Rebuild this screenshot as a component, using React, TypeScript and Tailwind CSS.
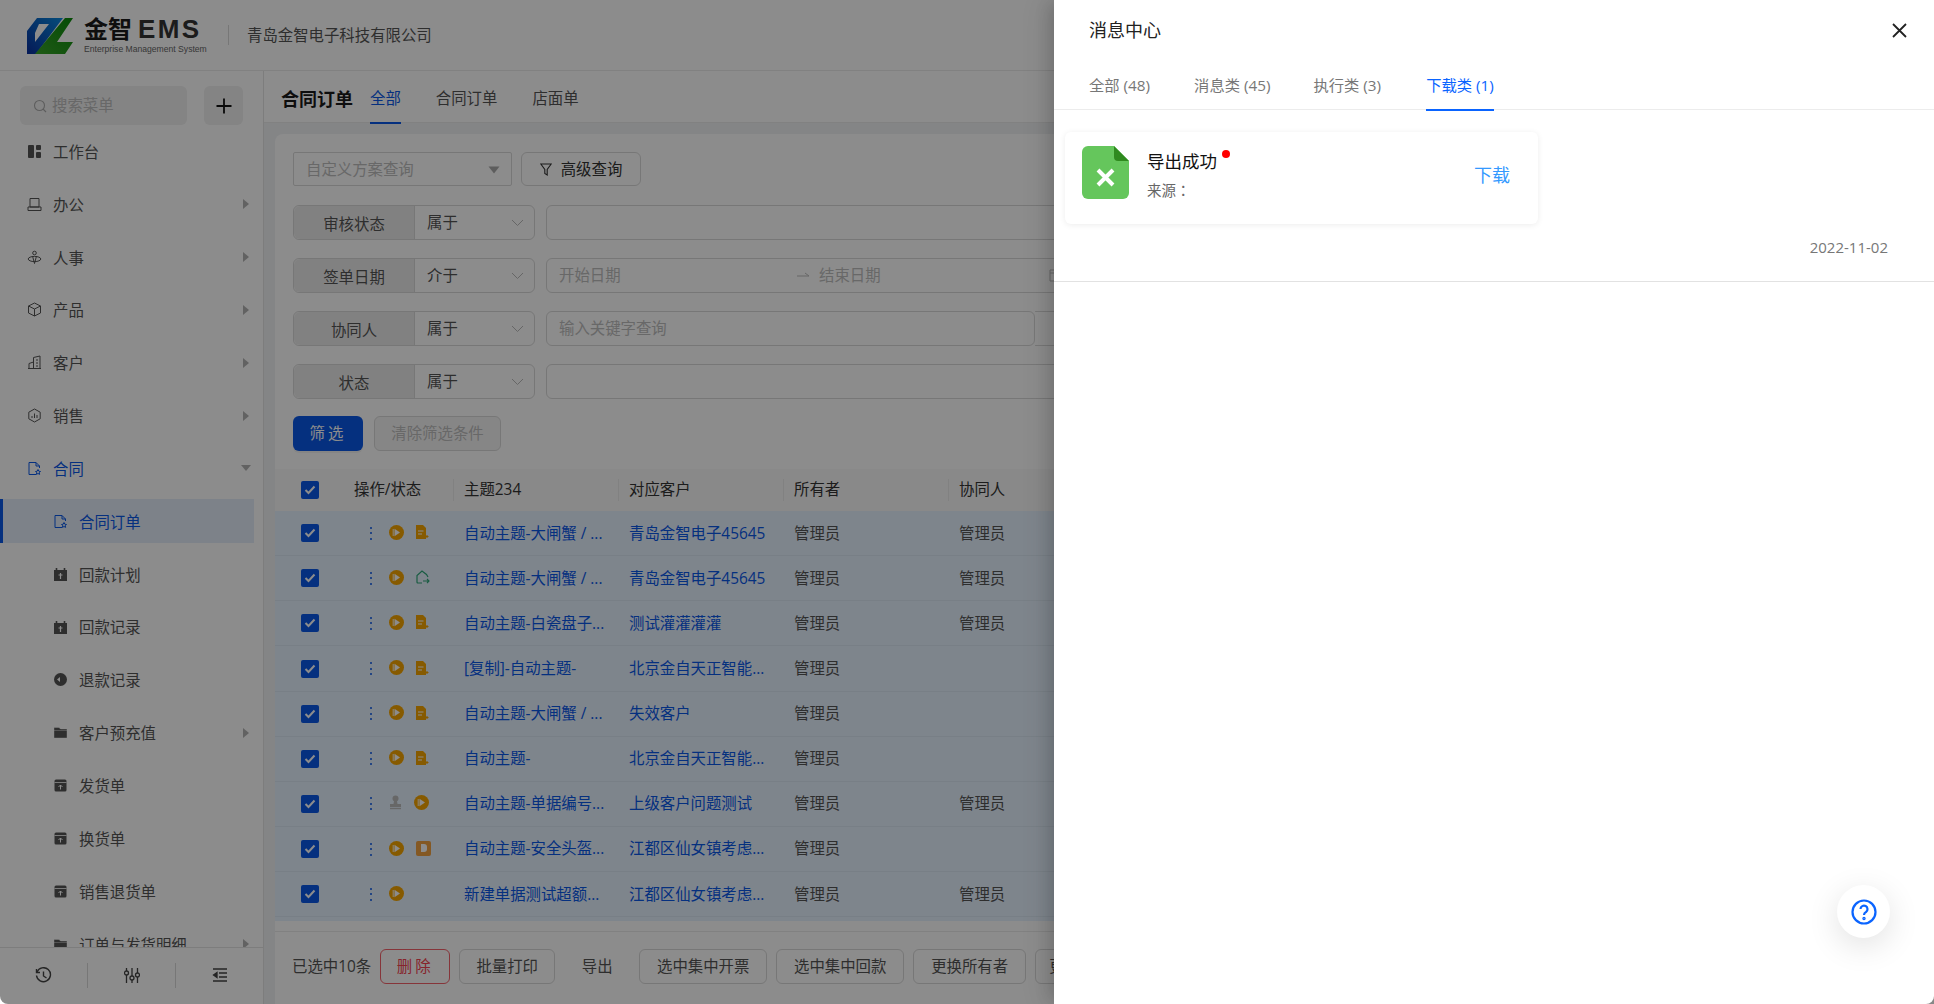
import React from "react";

const BLUE = "#0a58e8";

function Tri({ down }: { down?: boolean }) {
  return (
    <svg width="10" height="10" viewBox="0 0 10 10" className="text-[#b3b3b3]">
      {down ? <path d="M0 2 H10 L5 8z" fill="currentColor" /> : <path d="M2 0 V10 L8 5z" fill="currentColor" />}
    </svg>
  );
}

function MenuIcon({ name, color = "#555" }: { name: string; color?: string }) {
  const s = { fill: "none", stroke: color, strokeWidth: 1 };
  return (
    <svg width="15" height="15" viewBox="0 0 15 15" className="shrink-0">
      {name === "dash" && (
        <g fill={color}>
          <rect x="1" y="1" width="6" height="13" rx="1" />
          <rect x="9" y="1" width="5" height="5" rx="1" />
          <rect x="9" y="8" width="5" height="6" rx="1" />
        </g>
      )}
      {name === "office" && (
        <g {...s}>
          <path d="M3 1.5 H12 V10 H3z" />
          <path d="M1 13.5 H14 M1 13.5 V10 H14 V13.5" />
        </g>
      )}
      {name === "person" && (
        <g {...s}>
          <circle cx="7.5" cy="3" r="1.8" />
          <ellipse cx="7.5" cy="9" rx="6.3" ry="2.6" />
          <path d="M5.5 6 L7.5 13.5 L9.5 6" />
        </g>
      )}
      {name === "cube" && (
        <g {...s}>
          <path d="M7.5 1 L13.5 4 V11 L7.5 14 L1.5 11 V4z" />
          <path d="M1.5 4 L7.5 7 L13.5 4 M7.5 7 V14" />
        </g>
      )}
      {name === "building" && (
        <g {...s}>
          <path d="M6.5 13.5 V2.5 L13 1 V13.5 M6.5 7 L2 8.5 V13.5 M1 13.5 H14" />
          <path d="M9 5 H11 M9 8 H11 M9 11 H11" />
        </g>
      )}
      {name === "hex" && (
        <g {...s}>
          <path d="M7.5 1 L13.2 4.2 V10.8 L7.5 14 L1.8 10.8 V4.2z" />
          <path d="M5 10 V8 M7.5 10 V5.5 M10 10 V7" />
        </g>
      )}
      {name === "doc" && (
        <g {...s}>
          <path d="M9 13.5 H2 V1.5 H9 L12.5 5 V7" />
          <path d="M9 1.5 V5 H12.5" />
          <path d="M11 8.5 L11.8 10.2 L13.5 10.5 L12.2 11.6 L12.6 13.4 L11 12.5 L9.4 13.4 L9.8 11.6 L8.5 10.5 L10.2 10.2z" />
        </g>
      )}
      {name === "cal" && (
        <g>
          <path d="M1 3 H14 V14 H1z" fill={color} />
          <path d="M3.5 1 V4 M11.5 1 V4" stroke={color} strokeWidth="1.6" />
          <path d="M7.5 6 V12 M5.5 8 H9.5" stroke="#fff" strokeWidth="1.2" />
        </g>
      )}
      {name === "refund" && (
        <g>
          <circle cx="7.5" cy="7.5" r="6.5" fill={color} />
          <path d="M4 7.5 L7 5 V10z" fill="#fff" />
        </g>
      )}
      {name === "folder" && <path d="M1 2.5 H6 L7.5 4 H14 V13 H1z M1 5.5 H14" fill={color} stroke="#fff" strokeWidth="0.4" />}
      {name === "box" && (
        <g>
          <rect x="1.5" y="1.5" width="12" height="12" rx="1.5" fill={color} />
          <path d="M1.5 4.5 H13.5" stroke="#fff" strokeWidth="0.8" />
          <path d="M7.5 11.5 V7 M5.5 9 L7.5 7 L9.5 9" fill="none" stroke="#fff" strokeWidth="1" />
        </g>
      )}
    </svg>
  );
}

const menu = [
  { icon: "dash", label: "工作台" },
  { icon: "office", label: "办公", arrow: true },
  { icon: "person", label: "人事", arrow: true },
  { icon: "cube", label: "产品", arrow: true },
  { icon: "building", label: "客户", arrow: true },
  { icon: "hex", label: "销售", arrow: true },
  { icon: "doc", label: "合同", open: true },
  { icon: "doc", label: "合同订单", sub: true, active: true },
  { icon: "cal", label: "回款计划", sub: true },
  { icon: "cal", label: "回款记录", sub: true },
  { icon: "refund", label: "退款记录", sub: true },
  { icon: "folder", label: "客户预充值", sub: true, arrow: true },
  { icon: "box", label: "发货单", sub: true },
  { icon: "box", label: "换货单", sub: true },
  { icon: "box", label: "销售退货单", sub: true },
  { icon: "folder", label: "订单与发货明细", sub: true, arrow: true },
];

const rows = [
  { title: "自动主题-大闸蟹 / ...", customer: "青岛金智电子45645", peer: "管理员", st: "doc" },
  { title: "自动主题-大闸蟹 / ...", customer: "青岛金智电子45645", peer: "管理员", st: "sync" },
  { title: "自动主题-白瓷盘子...", customer: "测试灌灌灌灌", peer: "管理员", st: "doc" },
  { title: "[复制]-自动主题-", customer: "北京金自天正智能...", peer: "", st: "doc" },
  { title: "自动主题-大闸蟹 / ...", customer: "失效客户", peer: "", st: "doc" },
  { title: "自动主题-", customer: "北京金自天正智能...", peer: "", st: "doc" },
  { title: "自动主题-单据编号...", customer: "上级客户问题测试", peer: "管理员", st: "stamp" },
  { title: "自动主题-安全头盔...", customer: "江都区仙女镇考虑...", peer: "", st: "square" },
  { title: "新建单据测试超额...", customer: "江都区仙女镇考虑...", peer: "管理员", st: "" },
];

function Check() {
  return (
    <span className="flex h-[18px] w-[18px] items-center justify-center rounded-[2px] bg-[#0a58e8]">
      <svg width="12" height="10" viewBox="0 0 12 10">
        <path d="M1.5 5 L4.5 8 L10.5 1.5" fill="none" stroke="#fff" strokeWidth="2" />
      </svg>
    </span>
  );
}

function Play() {
  return (
    <svg width="15" height="15" viewBox="0 0 15 15" className="shrink-0">
      <circle cx="7.5" cy="7.5" r="7.5" fill="#f5a500" />
      <path d="M5.5 3.8 L11 7.5 L5.5 11.2z" fill="#fff" />
      <path d="M4.2 4 V11" stroke="#fff" strokeWidth="0.9" />
    </svg>
  );
}

function StatusIcon({ kind }: { kind: string }) {
  if (kind === "doc") {
    return (
      <svg width="13" height="14" viewBox="0 0 13 14" className="shrink-0">
        <path d="M0 0 H7 L10 3 V14 H0z" fill="#f5a500" />
        <path d="M2 6 H7.5 M2 9 H6" stroke="#fff" strokeWidth="1.1" />
        <path d="M7.5 11.5 H12.5 M11 10 V13" stroke="#f5a500" strokeWidth="1.1" />
      </svg>
    );
  }
  if (kind === "sync") {
    return (
      <svg width="14" height="14" viewBox="0 0 14 14" className="shrink-0">
        <path d="M6 13 H2 Q1 13 1 12 V5.5 L6 1 L10.5 4.5 L12 7" fill="none" stroke="#2fa87a" strokeWidth="1.2" />
        <path d="M7 11 H13 M11 9 L13 11 L11 13" fill="none" stroke="#2fa87a" strokeWidth="1.1" />
      </svg>
    );
  }
  return null;
}

function Stamp() {
  return (
    <svg width="13" height="15" viewBox="0 0 13 15" className="shrink-0">
      <circle cx="6.5" cy="3.5" r="3" fill="#bcbcbc" />
      <path d="M5 6 H8 L8.5 9 H12 V12 H1 V9 H4.5z" fill="#bcbcbc" />
      <path d="M1 13.5 H12" stroke="#bcbcbc" strokeWidth="1.4" />
    </svg>
  );
}

function FilterRow({ label, op, children }: { label: string; op: string; children?: React.ReactNode }) {
  return (
    <div className="flex h-[34.9px] gap-[11px]">
      <div className="flex w-[242px] shrink-0 rounded-[6px] border border-[#d9d9d9]">
        <div className="flex w-[121px] items-center justify-center rounded-l-[6px] border-r border-[#d9d9d9] bg-[#ececec] pt-[4px] text-[#555]">{label}</div>
        <div className="flex flex-1 items-center justify-between pt-[1px] pr-[10px] pl-[12px] text-[#555]">
          {op}
          <svg width="13" height="8" viewBox="0 0 13 8">
            <path d="M1 1 L6.5 6.5 L12 1" fill="none" stroke="#bbb" strokeWidth="1" />
          </svg>
        </div>
      </div>
      {children || <div className="flex-1 rounded-[6px] border border-[#d9d9d9]" />}
    </div>
  );
}

function OutlineBtn({ className, children }: { className: string; children: React.ReactNode }) {
  return (
    <div className={`flex h-[35px] shrink-0 items-center justify-center rounded-[6px] border border-[#d9d9d9] text-[#555] ${className}`}>{children}</div>
  );
}

export default function App() {
  return (
    <div className="relative h-[1004px] w-[1934px] overflow-hidden bg-white font-['Open_Sans','Noto_Sans_CJK_SC',sans-serif] text-[15.4px]">
      {/* page under the mask */}
      <div className="flex h-full flex-col bg-white">
        <header className="flex h-[71px] shrink-0 items-center border-b border-[#ececec] pl-[27px]">
          <svg width="46" height="36" viewBox="0 0 46 36" className="mt-[2px] shrink-0">
            <defs>
              <linearGradient id="lb" x1="0" y1="1" x2="1" y2="0">
                <stop offset="0" stopColor="#0a2f9f" />
                <stop offset="1" stopColor="#0a8be0" />
              </linearGradient>
              <linearGradient id="lg" x1="0" y1="1" x2="1" y2="0">
                <stop offset="0" stopColor="#3aa52a" />
                <stop offset="1" stopColor="#0b8a0b" />
              </linearGradient>
            </defs>
            <path d="M0 13 L10 0 H36 L9 36 H0z M8 15 V24 L22 6 H12z" fill="url(#lb)" fillRule="evenodd" />
            <path d="M38 0 H46 L30 24 H46 L38 36 H8z" fill="url(#lg)" />
          </svg>
          <div className="ml-[11px] flex w-[132px] flex-col">
            <div className="flex items-center leading-[24px] font-bold text-[#1a1a1a]">
              <span className="text-[24px]">金智</span>
              <span className="ml-[6px] font-['Liberation_Sans',sans-serif] text-[26px] tracking-[2.4px] text-[#333]">EMS</span>
            </div>
            <div className="mt-[3px] font-['Liberation_Sans',sans-serif] text-[8.6px] leading-[10px] whitespace-nowrap text-[#666]">Enterprise Management System</div>
          </div>
          <div className="ml-[12px] h-[20px] w-px bg-[#d9d9d9]" />
          <div className="ml-[18px] pt-[1px] text-[#555]">青岛金智电子科技有限公司</div>
        </header>
        <div className="flex min-h-0 flex-1">
          <aside className="flex w-[264px] shrink-0 flex-col border-r border-[#e4e4e4]">
            <div className="flex min-h-0 flex-1 flex-col overflow-hidden">
              <div className="flex shrink-0 gap-[17px] pt-[15px] pl-[20px]">
                <div className="flex h-[39px] w-[167px] items-center gap-[5px] rounded-[6px] bg-[#f0f0f0] pl-[13px] text-[#bdbdbd]">
                  <svg width="14" height="14" viewBox="0 0 14 14">
                    <circle cx="6.5" cy="6.5" r="5" fill="none" stroke="#aaa" strokeWidth="1.1" />
                    <path d="M10 10 L13 13" stroke="#aaa" strokeWidth="1.1" />
                  </svg>
                  搜索菜单
                </div>
                <div className="flex h-[39px] w-[39px] items-center justify-center rounded-[6px] bg-[#f0f0f0]">
                  <svg width="16" height="16" viewBox="0 0 16 16">
                    <path d="M8 0.5 V15.5 M0.5 8 H15.5" stroke="#111" strokeWidth="1.8" />
                  </svg>
                </div>
              </div>
              <nav className="flex flex-col">
                {menu.map((m, i) => (
                  <div key={i} className="flex h-[52.85px] shrink-0 items-center pr-[9px]">
                    <div className={`relative flex h-[44px] flex-1 items-center ${m.sub ? "pl-[53px]" : "pl-[27px]"} ${m.active ? "bg-[#e3edf9]" : ""}`}>
                      {m.active && <span className="absolute top-0 bottom-0 left-0 w-[3px] bg-[#0a58e8]" />}
                      <MenuIcon name={m.icon} color={m.active || m.open ? BLUE : "#555"} />
                      <span className={`ml-[11px] mt-[2px] ${m.active || m.open ? "text-[#0a58e8]" : "text-[#555]"}`}>{m.label}</span>
                      <span className="absolute top-[17px] right-[3px]">
                        {m.arrow && <Tri />}
                        {m.open && <Tri down />}
                      </span>
                    </div>
                  </div>
                ))}
              </nav>
            </div>
            <div className="flex h-[57px] shrink-0 items-center border-t border-[#e4e4e4] pb-[2px]">
              <div className="flex h-[25px] flex-1 items-center justify-center border-r border-[#d9d9d9]">
                <svg width="17" height="17" viewBox="0 0 17 17" fill="none" stroke="#444" strokeWidth="1.4">
                  <path d="M2 5 A7 7 0 1 1 1.5 8.5" />
                  <path d="M1.5 2 V5.5 H5 M8.5 4.5 V9 L11.5 11" />
                </svg>
              </div>
              <div className="flex h-[25px] flex-1 items-center justify-center border-r border-[#d9d9d9]">
                <svg width="16" height="17" viewBox="0 0 16 17" fill="none" stroke="#444" strokeWidth="1.3">
                  <path d="M2.5 1 V4 M2.5 8 V16 M8 1 V9 M8 13 V16 M13.5 1 V6 M13.5 10 V16" />
                  <circle cx="2.5" cy="6" r="2" />
                  <circle cx="8" cy="11" r="2" />
                  <circle cx="13.5" cy="8" r="2" />
                </svg>
              </div>
              <div className="flex h-[25px] flex-1 items-center justify-center">
                <svg width="16" height="14" viewBox="0 0 16 14" fill="none" stroke="#444" strokeWidth="1.3">
                  <path d="M1 1 H15 M7 5 H15 M7 9 H15 M1 13 H15" />
                  <path d="M5 4.5 L1.5 7 L5 9.5z" fill="#444" />
                </svg>
              </div>
            </div>
          </aside>
          <main className="flex min-w-0 flex-1 flex-col">
            <div className="flex h-[52px] shrink-0 border-b border-[#ececec] pl-[17px]">
              <div className="mr-[17px] pt-[15px] text-[18px] leading-[26px] font-bold text-[#1a1a1a]">合同订单</div>
              <div className="relative h-[52px] pt-[18px] leading-[20px] text-[#0a58e8]">
                全部
                <span className="absolute right-0 bottom-[-1px] left-0 h-[2px] bg-[#0a58e8]" />
              </div>
              <div className="ml-[35px] pt-[18px] leading-[20px] text-[#555]">合同订单</div>
              <div className="ml-[35px] pt-[18px] leading-[20px] text-[#555]">店面单</div>
            </div>
            <div className="min-h-0 flex-1 bg-[#f0f2f5] pt-[11px] pl-[11px]">
              <div className="flex h-full flex-col rounded-tl-[8px] bg-white">
                <div className="shrink-0 px-[18px] pt-[18px]">
                  <div className="flex gap-[9px]">
                    <div className="flex h-[34px] w-[219px] items-center justify-between rounded-[2px] border border-[#d9d9d9] pt-[2px] pr-[11px] pl-[12px] text-[#bdbdbd]">
                      自定义方案查询
                      <svg width="12" height="8" viewBox="0 0 12 8">
                        <path d="M0.5 0.5 H11.5 L6 7.5z" fill="#aaa" />
                      </svg>
                    </div>
                    <div className="flex h-[34px] w-[120px] items-center justify-center gap-[9px] rounded-[6px] border border-[#d9d9d9] pt-[1px] text-[#333]">
                      <svg width="12" height="13" viewBox="0 0 12 13">
                        <path d="M0.8 1 H11.2 L7.2 6.5 V12 L4.8 10.5 V6.5z" fill="none" stroke="#333" strokeWidth="1.1" />
                      </svg>
                      高级查询
                    </div>
                  </div>
                  <div className="mt-[19px] flex flex-col gap-[18px]">
                    <FilterRow label="审核状态" op="属于" />
                    <FilterRow label="签单日期" op="介于">
                      <div className="flex flex-1 items-center rounded-[6px] border border-[#d9d9d9] pl-[12px] text-[#bdbdbd]">
                        <span className="w-[238px] shrink-0">开始日期</span>
                        <svg width="13" height="8" viewBox="0 0 13 8" className="shrink-0">
                          <path d="M0 5 H12 L8 2" fill="none" stroke="#bbb" strokeWidth="1" />
                        </svg>
                        <span className="ml-[9px] shrink-0">结束日期</span>
                        <svg width="14" height="14" viewBox="0 0 14 14" className="ml-[168px] shrink-0">
                          <path d="M1 2 H13 V13 H1z M1 5 H13" fill="none" stroke="#bbb" strokeWidth="1" />
                        </svg>
                      </div>
                    </FilterRow>
                    <FilterRow label="协同人" op="属于">
                      <div className="flex flex-1">
                        <div className="flex w-[489px] items-center rounded-[6px] border border-[#d9d9d9] pl-[12px] text-[#bdbdbd]">输入关键字查询</div>
                        <div className="flex-1 border border-l-0 border-[#d9d9d9]" />
                      </div>
                    </FilterRow>
                    <FilterRow label="状态" op="属于" />
                  </div>
                  <div className="mt-[17px] flex gap-[11px]">
                    <div className="flex h-[35px] w-[70px] items-center justify-center rounded-[6px] bg-[#0a58e8] tracking-[3px] text-white shadow-[0_2px_0_rgba(0,0,0,0.05)]">筛选</div>
                    <div className="flex h-[35px] w-[127px] items-center justify-center rounded-[6px] border border-[#d9d9d9] bg-[#f5f5f5] text-[#bdbdbd]">清除筛选条件</div>
                  </div>
                </div>
                <div className="mt-[18px] shrink-0">
                  <div className="grid h-[42.5px] grid-cols-[79px_100px_165px_165px_165px_1fr] items-center bg-[#fafafa] pt-[1px] text-[#333]">
                    <div className="pl-[26px]">
                      <Check />
                    </div>
                    <div className="border-r border-[#ececec] leading-[22px]">操作/状态</div>
                    <div className="border-r border-[#ececec] pl-[10px] leading-[22px]">主题234</div>
                    <div className="border-r border-[#ececec] pl-[10px] leading-[22px]">对应客户</div>
                    <div className="border-r border-[#ececec] pl-[10px] leading-[22px]">所有者</div>
                    <div className="pl-[10px] leading-[22px]">协同人</div>
                  </div>
                  <div className="h-[409.5px] bg-[#e6f2ff]">
                    {rows.map((r, i) => (
                      <div key={i} className="grid h-[45.125px] grid-cols-[79px_100px_165px_165px_165px_1fr] items-center border-b border-[#dbe7f4]">
                        <div className="pl-[26px]">
                          <Check />
                        </div>
                        <div className="flex items-center pl-[16px]">
                          <span className="flex h-[13px] w-[2px] flex-col justify-between">
                            <i className="h-[2px] w-[2px] rounded-full bg-[#0a58e8]" />
                            <i className="h-[2px] w-[2px] rounded-full bg-[#0a58e8]" />
                            <i className="h-[2px] w-[2px] rounded-full bg-[#0a58e8]" />
                          </span>
                          <span className="ml-[17px] flex items-center gap-[12px] pb-[2px]">
                            {r.st === "stamp" ? (
                              <>
                                <Stamp />
                                <Play />
                              </>
                            ) : (
                              <>
                                <Play />
                                {r.st === "square" ? (
                                  <span className="flex h-[15px] w-[15px] items-center justify-center rounded-[2px] bg-[#f0a040]">
                                    <span className="h-[8px] w-[6px] rounded-r-[3px] bg-white" />
                                  </span>
                                ) : (
                                  <StatusIcon kind={r.st} />
                                )}
                              </>
                            )}
                          </span>
                        </div>
                        <div className="truncate pr-[4px] pl-[10px] text-[#0a58e8]">{r.title}</div>
                        <div className="truncate pl-[10px] text-[#0a58e8]">{r.customer}</div>
                        <div className="pl-[10px] text-[#555]">管理员</div>
                        <div className="pl-[10px] text-[#555]">{r.peer}</div>
                      </div>
                    ))}
                  </div>
                </div>
                <div className="mt-[10px] flex flex-1 items-start gap-[9px] border-t border-[#ececec] pt-[17px] pl-[17px]">
                  <div className="flex h-[35px] shrink-0 items-center text-[#555]">已选中10条</div>
                  <OutlineBtn className="w-[70px] border-[#f5616b] tracking-[3px] !text-[#f5424f]">删除</OutlineBtn>
                  <OutlineBtn className="w-[96px]">批量打印</OutlineBtn>
                  <div className="flex h-[35px] w-[66px] shrink-0 items-center justify-center text-[#555]">导出</div>
                  <OutlineBtn className="w-[128px]">选中集中开票</OutlineBtn>
                  <OutlineBtn className="w-[128px]">选中集中回款</OutlineBtn>
                  <OutlineBtn className="w-[113px]">更换所有者</OutlineBtn>
                  <OutlineBtn className="w-[105px]">更换协同人</OutlineBtn>
                </div>
              </div>
            </div>
          </main>
        </div>
      </div>

      {/* mask */}
      <div className="absolute inset-0 rounded-bl-[8px] bg-black/45" />

      {/* drawer */}
      <div className="absolute top-0 right-0 bottom-0 flex w-[880px] flex-col rounded-br-[8px] bg-white shadow-[-6px_0_16px_-2px_rgba(0,0,0,0.14),-9px_0_28px_0_rgba(0,0,0,0.08)]">
        <div className="flex h-[60px] shrink-0 items-center justify-between pr-[27px] pl-[35px]">
          <div className="text-[18px] text-[#222]">消息中心</div>
          <svg width="15" height="15" viewBox="0 0 15 15">
            <path d="M1 1 L14 14 M14 1 L1 14" stroke="#222" strokeWidth="1.8" />
          </svg>
        </div>
        <div className="flex h-[50px] shrink-0 items-start border-b border-[#ececec] pl-[35px] text-[15.3px] text-[#777]">
          <div className="pt-[14px] leading-[22px]">全部 (48)</div>
          <div className="ml-[44px] pt-[14px] leading-[22px]">消息类 (45)</div>
          <div className="ml-[43px] pt-[14px] leading-[22px]">执行类 (3)</div>
          <div className="relative ml-[45px] h-[50px] pt-[14px] leading-[22px] text-[#0a64ff]">
            下载类 (1)
            <span className="absolute right-0 bottom-[-1px] left-0 h-[2px] bg-[#0a64ff]" />
          </div>
        </div>
        <div className="h-[172px] shrink-0 border-b border-[#e2e2e2] pt-[22px] pl-[11px]">
          <div className="flex h-[92px] w-[473px] rounded-[6px] pt-[14px] pl-[17px] shadow-[0_1px_6px_rgba(0,0,0,0.08)]">
            <svg width="47" height="53" viewBox="0 0 47 53" className="shrink-0">
              <path d="M6 0 H32 L47 15 V47 a6 6 0 0 1 -6 6 H6 a6 6 0 0 1 -6 -6 V6 a6 6 0 0 1 6 -6z" fill="#65c65c" />
              <path d="M32 0 L47 15 H36 a4 4 0 0 1 -4 -4z" fill="#2f8a1f" />
              <path d="M16 24 L31 39 M31 24 L16 39" stroke="#fff" strokeWidth="4" />
            </svg>
            <div className="ml-[18px] flex-1">
              <div className="relative inline-block pt-[1px] text-[17.5px] leading-[28px] text-[#111]">
                导出成功
                <span className="absolute top-[4px] right-[-13px] h-[8px] w-[8px] rounded-full bg-[#ff0000]" />
              </div>
              <div className="mt-[4px] text-[14.5px] leading-[22px] text-[#666]">
                来源<span className="font-['Noto_Sans_CJK_TC',sans-serif]">：</span>
              </div>
            </div>
            <div className="mt-[16px] mr-[28px] text-[18px] leading-[26px] text-[#3399ff]">下载</div>
          </div>
          <div className="mt-[13px] pr-[46px] text-right text-[15px] leading-[20px] text-[#777]">2022-11-02</div>
        </div>
      </div>

      {/* floating help */}
      <div className="absolute top-[885px] left-[1837px] flex h-[53px] w-[53px] items-center justify-center rounded-full bg-white shadow-[0_8px_32px_rgba(0,0,0,0.12)]">
        <svg width="26" height="26" viewBox="0 0 26 26" fill="none" stroke="#0a64ff" strokeWidth="2.2">
          <circle cx="13" cy="13" r="11.5" />
          <path d="M9.5 10 a3.5 3.5 0 1 1 5.5 3 q-2 1 -2 3" />
          <circle cx="13" cy="19.5" r="0.6" fill="#0a64ff" />
        </svg>
      </div>
    </div>
  );
}
